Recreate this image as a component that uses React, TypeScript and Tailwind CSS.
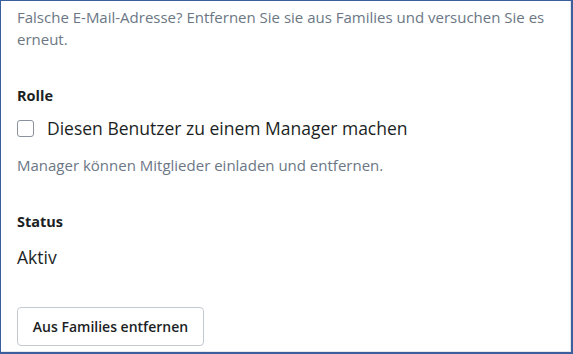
export default function App() {
  return (
    <div className="h-[354px] w-[573px] border-t border-l border-r-2 border-b-2 border-[#3a5f9c] bg-white font-['Open_Sans',sans-serif]">
      <div className="h-full border-r border-b border-[#e5e7eb] px-4">
        <p className="pt-[5px] text-[15px] leading-[22px] text-[#6b7785]">
          Falsche E-Mail-Adresse? Entfernen Sie sie aus Families und versuchen Sie es erneut.
        </p>

        <h3 className="mt-[36px] text-[14.5px] font-bold leading-[20px] text-[#1b1f24]">Rolle</h3>
        <label className="mt-[9px] flex items-center gap-[13px]">
          <input
            type="checkbox"
            className="h-[17px] w-[17px] appearance-none rounded-[3px] border border-[#8a929c] bg-white"
          />
          <span className="text-[17.5px] leading-[26px] text-[#1b1f24]">Diesen Benutzer zu einem Manager machen</span>
        </label>
        <p className="mt-[13px] text-[15px] leading-[22px] text-[#6b7785]">
          Manager können Mitglieder einladen und entfernen.
        </p>

        <h3 className="mt-[36px] text-[14.5px] font-bold leading-[20px] text-[#1b1f24]">Status</h3>
        <p className="mt-[12px] text-[17.5px] leading-[26px] text-[#1b1f24]">Aktiv</p>

        <button className="mt-[37px] h-[39px] w-[187px] rounded-[4px] border border-[#c4c9cf] bg-white text-[14px] font-semibold text-[#1b1f24]">
          Aus Families entfernen
        </button>
      </div>
    </div>
  );
}
